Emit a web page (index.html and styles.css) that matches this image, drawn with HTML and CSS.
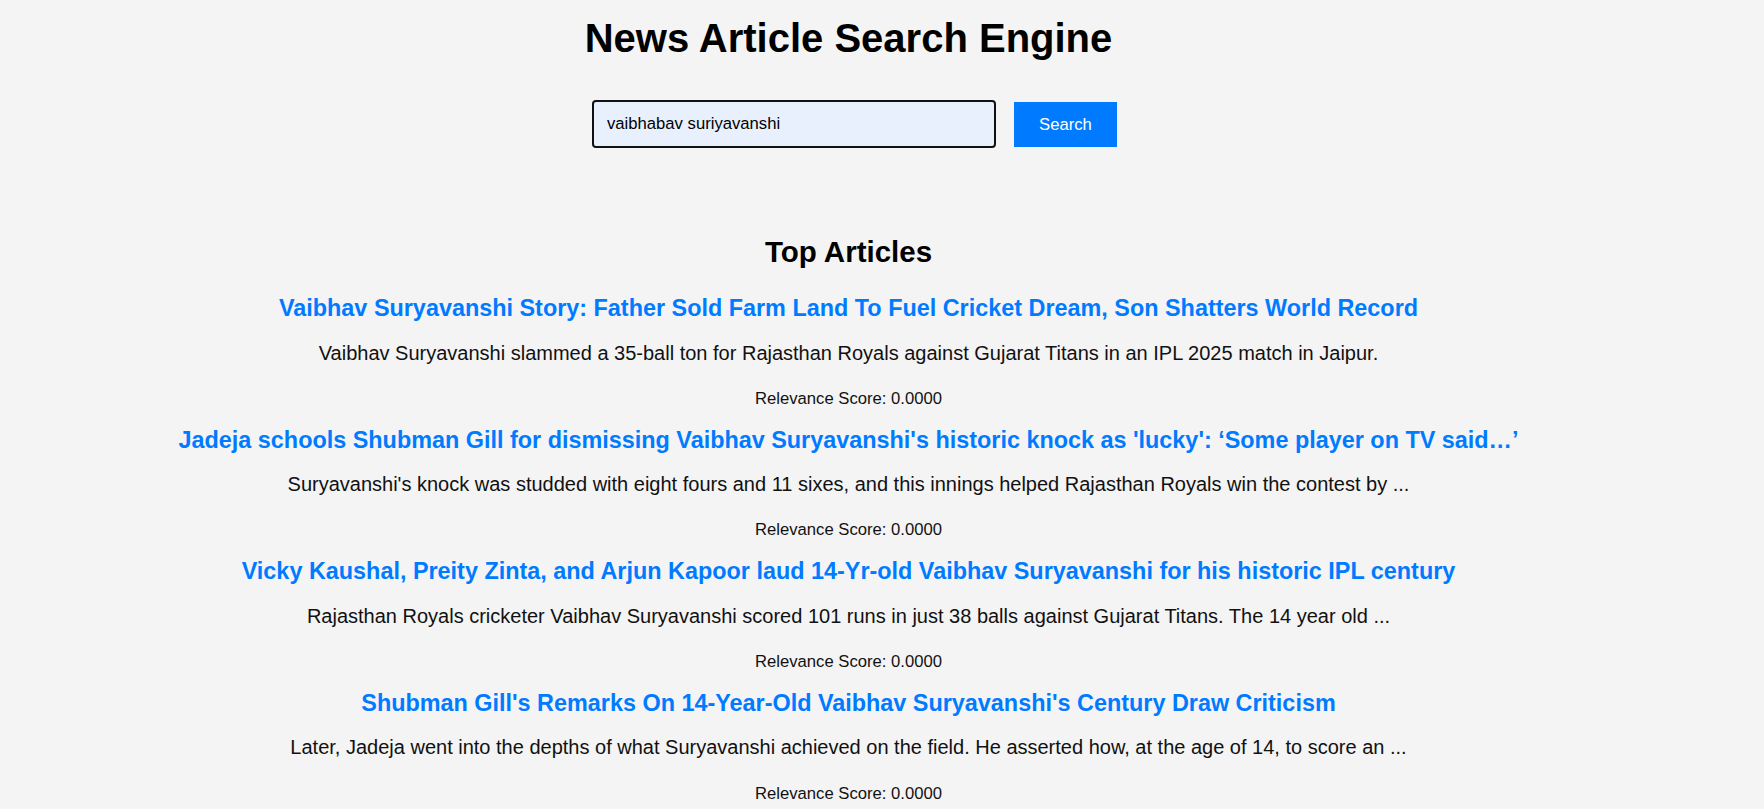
FILE: index.html
```html
<!DOCTYPE html>
<html lang="en">
<head>
<meta charset="utf-8">
<title>News Article Search Engine</title>
<link rel="stylesheet" href="styles.css">
</head>
<body>
<div class="page">
  <h1 class="title">News Article Search Engine</h1>
  <form class="search" onsubmit="return false">
    <input class="search-input" type="text" value="vaibhabav suriyavanshi">
    <button class="search-btn" type="submit">Search</button>
  </form>
  <h2 class="section-title">Top Articles</h2>
  <div class="results">
    <div class="article">
      <h3 class="article-title">Vaibhav Suryavanshi Story: Father Sold Farm Land To Fuel Cricket Dream, Son Shatters World Record</h3>
      <p class="article-desc">Vaibhav Suryavanshi slammed a 35-ball ton for Rajasthan Royals against Gujarat Titans in an IPL 2025 match in Jaipur.</p>
      <p class="article-score">Relevance Score: 0.0000</p>
    </div>
    <div class="article">
      <h3 class="article-title">Jadeja schools Shubman Gill for dismissing Vaibhav Suryavanshi's historic knock as 'lucky': ‘Some player on TV said…’</h3>
      <p class="article-desc">Suryavanshi's knock was studded with eight fours and 11 sixes, and this innings helped Rajasthan Royals win the contest by ...</p>
      <p class="article-score">Relevance Score: 0.0000</p>
    </div>
    <div class="article">
      <h3 class="article-title">Vicky Kaushal, Preity Zinta, and Arjun Kapoor laud 14-Yr-old Vaibhav Suryavanshi for his historic IPL century</h3>
      <p class="article-desc">Rajasthan Royals cricketer Vaibhav Suryavanshi scored 101 runs in just 38 balls against Gujarat Titans. The 14 year old ...</p>
      <p class="article-score">Relevance Score: 0.0000</p>
    </div>
    <div class="article">
      <h3 class="article-title">Shubman Gill's Remarks On 14-Year-Old Vaibhav Suryavanshi's Century Draw Criticism</h3>
      <p class="article-desc">Later, Jadeja went into the depths of what Suryavanshi achieved on the field. He asserted how, at the age of 14, to score an ...</p>
      <p class="article-score">Relevance Score: 0.0000</p>
    </div>
  </div>
</div>
</body>
</html>
```
FILE: styles.css
```css
html, body {
  margin: 0;
  padding: 0;
  background: #f4f4f4;
}

body {
  font-family: "Liberation Sans", Arial, sans-serif;
  color: #000;
  overflow: hidden;
}

.page {
  width: 1697px;
  text-align: center;
  padding-top: 15px;
}

.title {
  margin: 0;
  font-size: 40px;
  line-height: 46px;
  font-weight: bold;
}

.search {
  margin: 39px 0 0;
  padding-left: 12px;
  display: flex;
  justify-content: center;
  gap: 18px;
}

.search-input {
  box-sizing: border-box;
  width: 404px;
  height: 48px;
  padding: 0 13px;
  font-family: "Liberation Sans", Arial, sans-serif;
  font-size: 16.67px;
  color: #000;
  background: #e8f0fe;
  border: 2px solid #111;
  border-radius: 4px;
  outline: none;
}

.search-btn {
  box-sizing: border-box;
  width: 103px;
  height: 45px;
  margin-top: 2px;
  padding: 0;
  border: none;
  border-radius: 0;
  background: #007bff;
  color: #fff;
  font-family: "Liberation Sans", Arial, sans-serif;
  font-size: 16.67px;
  cursor: pointer;
}

.section-title {
  margin: 87px 0 0;
  font-size: 29.5px;
  line-height: 34px;
  font-weight: bold;
}

.results {
  display: flex;
  flex-direction: column;
  margin-top: 26px;
  gap: 18.7px;
}

.article-title {
  margin: 0;
  font-size: 23.4px;
  line-height: 27px;
  font-weight: bold;
  color: #007bff;
}

.article-desc {
  margin: 19.6px 0 0;
  font-size: 20px;
  line-height: 23px;
  color: #111;
}

.article-score {
  margin: 24.3px 0 0;
  font-size: 16.67px;
  line-height: 19px;
  color: #111;
}
```
